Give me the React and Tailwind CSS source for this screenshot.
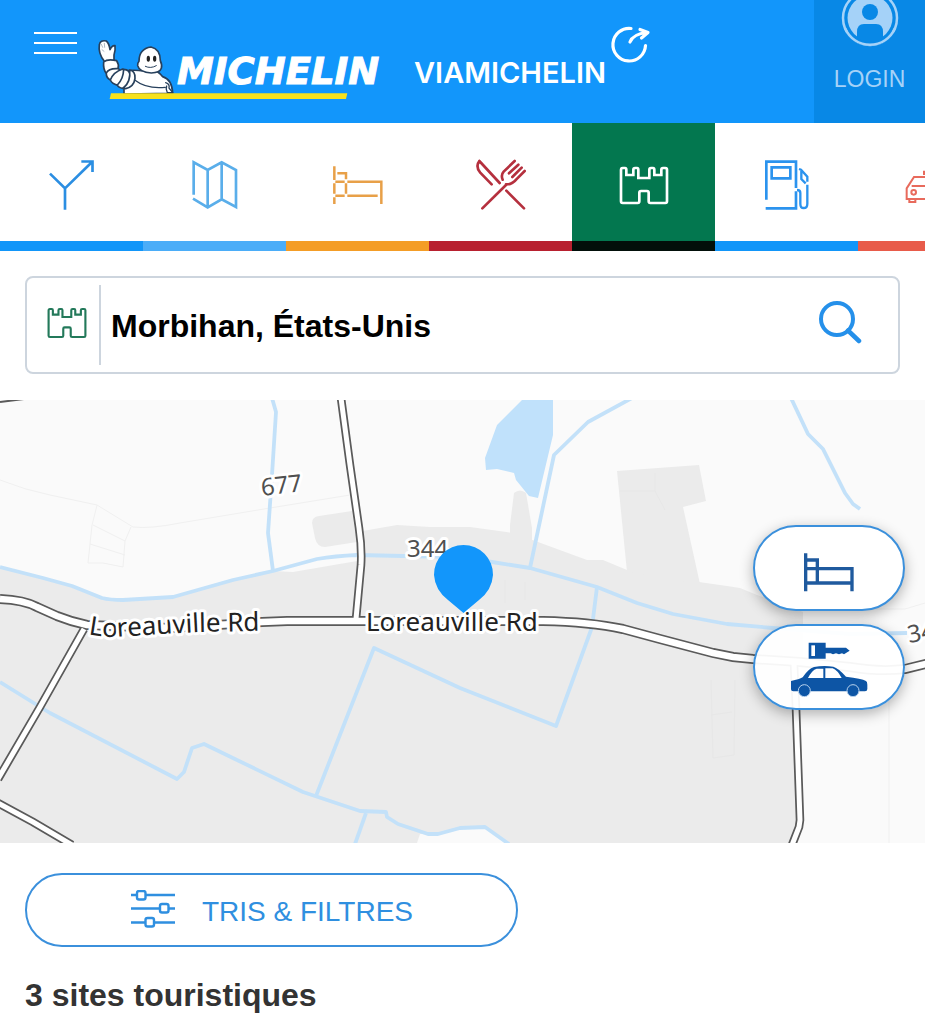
import { useState } from 'react';

const castlePath =
  'M482 137q0-6 5-6h7q4 0 4 5v16h21v-16q0-5 5-5h6q4 0 4 5v25h33v-25q0-5 5-5h6q4 0 4 5v16h21v-16q0-5 5-5h7q5 0 5 5v95q0 5-5 5h-45q-5 0-5-5v-26q0-5-5-5h-18q-5 0-5 5v26q0 5-5 5h-45q-5 0-5-5z';

function CastleIcon({ className }) {
  return (
    <svg viewBox="476 125 150 117" className={className} fill="none" stroke="currentColor" strokeWidth="8" aria-hidden="true">
      <path d={castlePath} />
    </svg>
  );
}

function TabIcon({ viewBox, children }) {
  return (
    <svg viewBox={viewBox} className="h-[60px] w-[60px]" fill="none" stroke="currentColor" strokeWidth="8" aria-hidden="true">
      {children}
    </svg>
  );
}

const tabs = [
  {
    name: 'Itinéraires',
    className: 'border-[#1296f9] text-[#2b8ee2]',
    icon: (
      <TabIcon viewBox="127 90 180 180">
        <path d="M151 146L196 190V254M196 190L277 111M245 109.500H278.500V141" />
      </TabIcon>
    ),
  },
  {
    name: 'Cartes',
    className: 'border-[#4badf8] text-[#5aaeea]',
    icon: (
      <TabIcon viewBox="555 90 180 180">
        <path d="M581 209V112L623 135L665 112L708 135V246L665 223L623 247L579 221M623 135V247M665 112V223" />
      </TabIcon>
    ),
  },
  {
    name: 'Hôtels',
    className: 'border-[#f49d26] text-[#e8a048]',
    icon: (
      <TabIcon viewBox="984 90 180 180">
        <path strokeWidth="7.500" d="M1003 124V165M1003 175V206M1003 217V237M1012 145H1038V163M1038 175V206M1006 170H1034M1042 170H1144V237M1006 212H1034M1042 212H1133" />
      </TabIcon>
    ),
  },
  {
    name: 'Restaurants',
    className: 'border-[#b8202f] text-[#b5303e]',
    icon: (
      <TabIcon viewBox="32 90 180 180">
        <path
          strokeLinecap="round"
          strokeLinejoin="round"
          d="M57 108L118 174M57 108Q45 123 59 142L94 178M138 197L191 250M66 250L137 180M163 108L130 140Q121 150 127 164M174 119L146 145M184 128L156 156M193 138L168 163Q155 179 137 178"
        />
      </TabIcon>
    ),
  },
  {
    name: 'Sites touristiques',
    className: 'border-[#020f0a] bg-[#03774f] text-white',
    icon: <CastleIcon className="h-[39px] w-[50px]" />,
  },
  {
    name: 'Stations-service',
    className: 'border-[#1296f9] text-[#2b93ee]',
    icon: (
      <TabIcon viewBox="892 90 180 180">
        <path d="M920 224V110H1009V189M1009 199V250H918M936 127H992V160H936Z" />
        <path strokeWidth="7" d="M1018 132L1024 134L1043 155V170M1025 138V162L1038 175M1043 179V236Q1043 249 1032 249Q1022 249 1022 236V204Q1022 195 1012 195" />
      </TabIcon>
    ),
  },
  {
    name: 'Location de voiture',
    className: 'border-[#e85b4a] text-[#e86a5c]',
    icon: (
      <TabIcon viewBox="1320 90 180 180">
        <path strokeWidth="6" d="M1454 156H1362L1340 190V222H1476V190L1454 156M1355 183H1461M1348 222V231H1366V222M1450 222V231H1468V222M1392 150V140H1424V150" />
        <circle cx="1361" cy="202" r="7" strokeWidth="6" />
        <circle cx="1455" cy="202" r="7" strokeWidth="6" />
      </TabIcon>
    ),
  },
];

function Logo() {
  return (
    <svg viewBox="96 20 556 84" className="h-[84px] w-[556px]" role="img" aria-label="Michelin ViaMichelin">
      <g transform="scale(.33333)" fill="#fff" stroke="#27405c" strokeWidth="5" strokeLinejoin="round" strokeLinecap="round">
        {/* Bonhomme */}
        <path d="M372 282V262Q392 250 384 212Q405 209 430 213H470Q482 222 488 230Q516 238 518 280Z" />
        <path d="M404 240Q440 268 496 262" fill="none" strokeWidth="4" />
        <path d="M497 248Q510 252 507 264L518 278H502Q496 268 500 258" strokeWidth="4" />
        <path d="M313 184Q294 160 298 134Q301 119 319 123Q327 129 330 149Q336 135 345 137Q347 150 342 165V186Z" />
        <path d="M311 186Q322 176 350 182Q358 194 354 206L319 220Q309 208 311 186Z" />
        <path d="M319 219Q326 204 355 206Q366 211 357 224L332 240Q318 234 319 219Z" />
        <path d="M331 240Q340 216 368 207Q382 216 374 240L355 256Q336 252 331 240Z" />
        <path d="M352 255Q370 238 371 208Q390 208 391 229Q390 255 368 265Q355 263 352 255Z" />
        <path d="M370 264Q393 246 389 210Q406 212 405 235Q402 260 377 266Z" />
        <path d="M413 197Q412 190 417 184Q417 146 453 141Q481 147 481 182Q487 196 484 205Q480 218 454 219Q418 217 413 197Z" />
        <path d="M436 199Q452 207 469 197" fill="none" strokeWidth="3" />
        <path d="M304 133L308 142M313 130L314 142M306 149L312 154" fill="none" strokeWidth="2" stroke="#8796a5" />
        <ellipse cx="445" cy="176" rx="5" ry="9" fill="#222" stroke="none" />
        <ellipse cx="464" cy="176" rx="5" ry="9" fill="#222" stroke="none" />
        <path d="M333 280H1042L1038 297H329Z" fill="#f7e11d" stroke="none" />
      </g>
      <text x="177" y="84" fill="#fff" stroke="#fff" strokeWidth="1" className="font-['DejaVu_Sans',sans-serif] text-[37px] font-bold italic">
        MICHELIN
      </text>
      <text x="414" y="83" fill="#fff" className="font-[Inter,sans-serif] text-[29px] font-semibold">
        VIAMICHELIN
      </text>
      <g fill="none" stroke="#fff" strokeWidth="3.2" strokeLinecap="round" strokeLinejoin="round">
        <path d="M631 28.500A16.300 16.300 0 1 0 645.500 45.500" />
        <path d="M630 42Q633 34 647 32.500M640 29.500L648 32.500L641.500 38" />
      </g>
    </svg>
  );
}

function Header() {
  return (
    <header className="flex h-[123px] items-start overflow-hidden bg-[#1296fb]">
      <button type="button" aria-label="Menu" className="ml-[34px] mt-8 flex w-[43px] shrink-0 flex-col gap-2">
        <span className="h-[2px] bg-white"></span>
        <span className="h-[2px] bg-white"></span>
        <span className="h-[2px] bg-white"></span>
      </button>
      <a href="#" className="ml-[19px] mt-5 shrink-0">
        <Logo />
      </a>
      <a href="#" className="ml-auto flex h-full w-[111px] shrink-0 flex-col items-center bg-[#0888e6] text-[#a5d2f8]">
        <svg viewBox="0 10 58 47" className="h-[47px] w-[58px]" aria-hidden="true">
          <circle cx="29" cy="28" r="27" fill="none" stroke="currentColor" strokeWidth="2.5" />
          <circle cx="29" cy="28" r="22.500" fill="currentColor" />
          <circle cx="29" cy="22" r="8" fill="#0888e6" />
          <path d="M16 51V42Q16 34 23 34H35Q42 34 42 42V51Z" fill="#0888e6" />
          <path d="M8 39.500A24 24 0 0 0 50 39.500L53 44Q45 56 29 56Q13 56 5 44Z" fill="#0888e6" />
          <path d="M4 38A27 27 0 0 0 54 38" fill="none" stroke="currentColor" strokeWidth="2.5" />
        </svg>
        <span className="mt-[18px] text-[23px] leading-7">LOGIN</span>
      </a>
    </header>
  );
}

function Tabs() {
  return (
    <nav className="flex overflow-hidden">
      {tabs.map((tab) => (
        <a
          key={tab.name}
          href="#"
          aria-label={tab.name}
          className={`flex h-32 w-[143px] shrink-0 items-center justify-center border-b-10 pt-[6px] ${tab.className}`}
        >
          {tab.icon}
        </a>
      ))}
    </nav>
  );
}

function SearchBar() {
  const [place, setPlace] = useState('Morbihan, États-Unis');

  return (
    <form
      className="mx-[25px] mt-[25px] flex h-[98px] items-center rounded-lg border-2 border-[#cdd5de] bg-white"
      onSubmit={(e) => e.preventDefault()}
    >
      <label htmlFor="place" aria-label="Lieu" className="flex h-20 items-center border-r-2 border-[#cdd5de] pb-1 pl-5 pr-3 text-[#23795a]">
        <CastleIcon className="h-[32px] w-[40px]" />
      </label>
      <input
        id="place"
        type="text"
        value={place}
        onChange={(e) => setPlace(e.target.value)}
        className="min-w-0 flex-1 pl-[10px] pt-[2px] text-[32px] font-bold text-black outline-none"
      />
      <button type="submit" aria-label="Rechercher" className="mr-9 pb-1 text-[#2590ea]">
        <svg viewBox="0 0 44 44" className="h-11 w-11" fill="none" stroke="currentColor" strokeWidth="4" aria-hidden="true">
          <circle cx="19" cy="18" r="16" />
          <path d="M30 29.500L41 40" strokeWidth="4.5" strokeLinecap="round" />
        </svg>
      </button>
    </form>
  );
}

const streams = [
  'M0 567L43 578L72 586L102 598Q110 600 123 600L173 597L233 580L273 571L317 559Q335 556 357 555L403 556L460 557L492 562L530 568L597 587L637 603L673 614L727 624L773 628L850 634L907 633',
  'M272 398L276 412L272 475L268 533L273 571',
  'M632 398L588 422L554 455L530 568',
  'M791 398L808 434L823 449L845 493L853 504L860 509',
  'M597 587L593 619L591 630L556 726L460 688L374 648L316 796',
  'M0 682L37 705L50 713L177 779L184 772L192 748L204 744L303 792L360 811L386 812L387 817L398 824L428 834H438L460 828L485 827L509 844',
  'M366 813L355 844',
];

const mainRoad =
  'M0 599Q24 600 37 607L57 616Q72 622 87 625L170 628L262 622L287 621H543Q590 622 623 629L660 639L713 653L733 657L753 659L800 662L850 667Q880 672 905 669L930 663';
const sideRoads = [
  'M341 398L350 465L359 528Q362 548 361 565L356 619',
  'M84 629L40 707L-2 779',
  'M-2 803L33 822L72 845',
  'M794 664L796 708L800 820L799 827L792 845',
];

function Map() {
  return (
    <svg viewBox="0 400 925 443" preserveAspectRatio="xMidYMid slice" className="block h-[443px] w-full bg-[#fafafa]" role="img" aria-label="Carte">
      {/* Zones bâties */}
      <g fill="#ebebeb">
        <path d="M0 567L43 578L72 586L102 598L123 600L173 597L233 580L273 571L293 572L357 561L357 532L397 525L430 527L470 527L513 533L538 542L587 560H603L627 570L699 582L727 586L740 588L757 595L803 612V664H796L800 820L792 843H507L483 827L460 828L438 834H420L417 843H0Z" />
        <path d="M617 471L699 465L706 501L683 507L700 584L627 572Z" />
        <path d="M510 534V525L514 493Q520 488 526 493L532 528V545Z" />
        <path d="M319 516L352 511L357 542L325 547Q317 547 315 538L312 523Q312 517 319 516Z" />
      </g>
      <path d="M523 399H553V435L538 498L529 496L516 480L514 473L497 469L486 470L485 458L497 425Z" fill="#c0e1fb" />
      <g fill="none" stroke="#f0f0f0" strokeWidth="1">
        <path d="M0 480Q25 490 50 495L97 505L133 527Q150 529 180 523L270 508L350 495M97 505L92 525L88 563H103L123 567L125 541L131 527M93 525L125 541M90 544L125 555M805 609H905L925 603M889 640V843" />
      </g>
      <g fill="none" stroke="#e7e7e7" strokeWidth="1">
        <path d="M711 680L713 758L734 755L735 680M711 715L732 712M505 580V603M525 582V600M655 491V473M620 491H655L665 510" />
      </g>
      <g fill="none" stroke="#c3e1f9" strokeWidth="3.8" strokeLinejoin="round">
        {streams.map((d) => (
          <path key={d} d={d} />
        ))}
      </g>
      {/* Routes : contour puis chaussée */}
      <g fill="none" stroke="#5a5a5a" strokeWidth="8.500">
        {sideRoads.map((d) => (
          <path key={d} d={d} />
        ))}
        <path d={mainRoad} strokeWidth="10" />
      </g>
      <g fill="none" stroke="#fff" strokeWidth="5">
        <path d={mainRoad} strokeWidth="6.500" />
        {sideRoads.map((d) => (
          <path key={d} d={d} />
        ))}
      </g>
      <path d="M0 402L32 398" fill="none" stroke="#5a5a5a" strokeWidth="2" />
      <path id="rd" d="M88 634Q103 637 115 637Q160 634 200 632L300 630" fill="none" />
      <g className="font-['Noto_Sans','Open_Sans',sans-serif] text-[24px]" fill="#505050" stroke="#fff" strokeWidth="6" strokeLinejoin="round" paintOrder="stroke">
        <text x="262" y="496" transform="rotate(-7 262 496)">677</text>
        <text x="407" y="557">344</text>
        <text x="909" y="643" transform="rotate(-10 909 643)">344</text>
        <text fill="#222" className="text-[26px]">
          <textPath href="#rd">Loreauville Rd</textPath>
        </text>
        <text x="366" y="631" fill="#222" className="text-[26px]">Loreauville Rd</text>
      </g>
      <path d="M463.500 545A29.500 29.500 0 0 1 493 575Q492 590 479 600L463.500 613L448 600Q435 590 434 575A29.500 29.500 0 0 1 463.500 545Z" fill="#1296fb" />
    </svg>
  );
}

function MapSection() {
  return (
    <section className="relative mt-[26px]">
      <Map />
      <div className="absolute right-5 top-[125px] flex flex-col gap-[13px]">
        <button
          type="button"
          aria-label="Hôtels"
          className="flex h-[86px] w-[152px] items-center justify-center rounded-full border-2 border-[#3b90dc] bg-white text-[#1f5a9e] shadow-[0_4px_14px_rgba(0,0,0,0.3)]"
        >
          <svg viewBox="177 81 180 180" className="h-[60px] w-[60px]" fill="none" stroke="currentColor" strokeWidth="10" aria-hidden="true">
            <path d="M197 127V241M197 147H232V216M197 173H336V241M197 216H336" />
          </svg>
        </button>
        <button
          type="button"
          aria-label="Location de voiture"
          className="flex h-[86px] w-[152px] items-center justify-center rounded-full border-2 border-[#3b90dc] bg-white/95 text-[#0d55a5] shadow-[0_4px_14px_rgba(0,0,0,0.3)]"
        >
          <svg viewBox="147 381 240 180" className="h-[60px] w-[80px]" fill="currentColor" aria-hidden="true">
            <path d="M206 398H257V413H318L329 422L318 429L312 433L306 430L297 433L288 430L279 433L272 430H257V446H206Z" />
            <path d="M214 406H225V438H214Z" fill="#fff" />
            <path d="M153 513Q178 508 188 502Q205 476 222 471Q250 466 280 470Q295 474 318 500Q365 505 378 513Q382 515 382 524V537Q382 544 375 544H160Q153 544 153 538Z" />
            <path d="M204 504Q216 480 230 476H250V504ZM256 475H278Q292 480 305 504H256Z" fill="#fff" />
            <circle cx="193" cy="542" r="18" stroke="#b9d3ee" strokeWidth="3" />
            <circle cx="339" cy="542" r="18" stroke="#b9d3ee" strokeWidth="3" />
          </svg>
        </button>
      </div>
    </section>
  );
}

export default function App() {
  return (
    <div className="min-h-screen overflow-hidden bg-white font-['Liberation_Sans',Arial,sans-serif]">
      <Header />
      <Tabs />
      <main>
        <SearchBar />
        <MapSection />
        <div className="px-[25px] pt-[30px]">
          <button
            type="button"
            className="flex h-[74px] w-[493px] max-w-full items-center justify-center gap-[26px] rounded-full border-2 border-[#3b90dc] text-[28px] text-[#2f8fe0]"
          >
            <svg viewBox="129 890 46 41" className="h-[41px] w-[46px]" fill="none" stroke="currentColor" strokeWidth="2.4" aria-hidden="true">
              <path d="M130 895H174M130 908.500H174M130 922.500H174" />
              <g fill="#fff">
                <rect x="136" y="891" width="8.500" height="8.500" rx="2" />
                <rect x="159" y="904" width="8.500" height="8.500" rx="2" />
                <rect x="144.500" y="918" width="8.500" height="8.500" rx="2" />
              </g>
            </svg>
            <span className="mt-1">TRIS &amp; FILTRES</span>
          </button>
          <h1 className="mt-[30px] text-[32px] font-bold leading-9 text-[#333]">3 sites touristiques</h1>
        </div>
      </main>
    </div>
  );
}
